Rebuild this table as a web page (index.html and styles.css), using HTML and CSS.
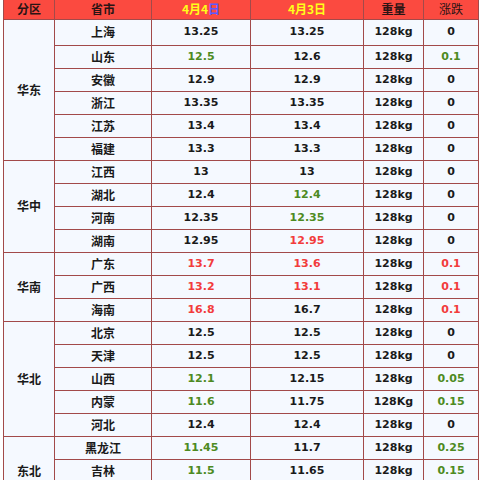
FILE: index.html
```html
<!DOCTYPE html>
<html lang="zh">
<head>
<meta charset="utf-8">
<link rel="stylesheet" href="styles.css">
</head>
<body>
<table class="price">
  <colgroup>
    <col class="c-area"><col class="c-prov"><col class="c-d4"><col class="c-d3"><col class="c-w"><col class="c-ch">
  </colgroup>
  <thead>
    <tr class="head">
      <th>分区</th><th>省市</th><th class="yel">4月4<span class="blu">日</span></th><th class="yel">4月3日</th><th>重量</th><th class="thin">涨跌</th>
    </tr>
  </thead>
  <tbody>
    <tr class="first"><td rowspan="6" class="area">华东</td><td>上海</td><td>13.25</td><td>13.25</td><td>128kg</td><td>0</td></tr>
    <tr><td>山东</td><td class="g">12.5</td><td>12.6</td><td>128kg</td><td class="g">0.1</td></tr>
    <tr><td>安徽</td><td>12.9</td><td>12.9</td><td>128kg</td><td>0</td></tr>
    <tr><td>浙江</td><td>13.35</td><td>13.35</td><td>128kg</td><td>0</td></tr>
    <tr><td>江苏</td><td>13.4</td><td>13.4</td><td>128kg</td><td>0</td></tr>
    <tr><td>福建</td><td>13.3</td><td>13.3</td><td>128kg</td><td>0</td></tr>

    <tr><td rowspan="4" class="area">华中</td><td>江西</td><td>13</td><td>13</td><td>128kg</td><td>0</td></tr>
    <tr><td>湖北</td><td>12.4</td><td class="g">12.4</td><td>128kg</td><td>0</td></tr>
    <tr><td>河南</td><td>12.35</td><td class="g">12.35</td><td>128kg</td><td>0</td></tr>
    <tr><td>湖南</td><td>12.95</td><td class="r">12.95</td><td>128kg</td><td>0</td></tr>

    <tr><td rowspan="3" class="area">华南</td><td>广东</td><td class="r">13.7</td><td class="r">13.6</td><td>128kg</td><td class="r">0.1</td></tr>
    <tr><td>广西</td><td class="r">13.2</td><td class="r">13.1</td><td>128kg</td><td class="r">0.1</td></tr>
    <tr><td>海南</td><td class="r">16.8</td><td>16.7</td><td>128kg</td><td class="r">0.1</td></tr>

    <tr><td rowspan="5" class="area">华北</td><td>北京</td><td>12.5</td><td>12.5</td><td>128kg</td><td>0</td></tr>
    <tr><td>天津</td><td>12.5</td><td>12.5</td><td>128kg</td><td>0</td></tr>
    <tr><td>山西</td><td class="g">12.1</td><td>12.15</td><td>128kg</td><td class="g">0.05</td></tr>
    <tr><td>内蒙</td><td class="g">11.6</td><td>11.75</td><td>128Kg</td><td class="g">0.15</td></tr>
    <tr><td>河北</td><td>12.4</td><td>12.4</td><td>128kg</td><td>0</td></tr>

    <tr><td rowspan="3" class="area">东北</td><td>黑龙江</td><td class="g">11.45</td><td>11.7</td><td>128kg</td><td class="g">0.25</td></tr>
    <tr><td>吉林</td><td class="g">11.5</td><td>11.65</td><td>128kg</td><td class="g">0.15</td></tr>
    <tr><td>辽宁</td><td class="g">11.5</td><td>11.6</td><td>128kg</td><td class="g">0.1</td></tr>
  </tbody>
</table>
</body>
</html>
```

FILE: styles.css
```css
html, body {
  margin: 0;
  padding: 0;
  background: #ffffff;
}
body {
  padding-left: 3px;
}
.price {
  border-collapse: collapse;
  table-layout: fixed;
  width: 475px;
  font-family: "DejaVu Sans", "Noto Sans CJK SC", sans-serif;
  font-size: 11px;
  font-weight: bold;
  color: #1a1a1a;
  background: #f5f9ff;
}
.c-area { width: 51px; }
.c-prov { width: 97px; }
.c-d4 { width: 99px; }
.c-d3 { width: 113px; }
.c-w { width: 60px; }
.c-ch { width: 55px; }
.price th, .price td {
  border: 1px solid #a24a4a;
  padding: 0;
  text-align: center;
  vertical-align: middle;
  line-height: 14px;
}
.price tr { height: 23px; }
.price tr.head { height: 19px; }
.price tr.first { height: 26px; }
.head th {
  background: #fb4a40;
  color: #2a1414;
  font-family: "Noto Sans CJK SC", sans-serif;
  font-size: 12px;
  border-top: 0;
}
.head th.thin { font-weight: normal; }
.head th.yel { color: #ffff1a; }
.head th .blu { color: #5a5aff; }
.price td:nth-child(1), .area {
  font-family: "Noto Sans CJK SC", sans-serif;
  font-size: 12px;
}
.price tbody td.area + td, .price tbody tr:not(:has(.area)) td:first-child {
  font-family: "Noto Sans CJK SC", sans-serif;
  font-size: 12px;
}
.g { color: #4d8a22; }
.r { color: #f23c3c; }
```
